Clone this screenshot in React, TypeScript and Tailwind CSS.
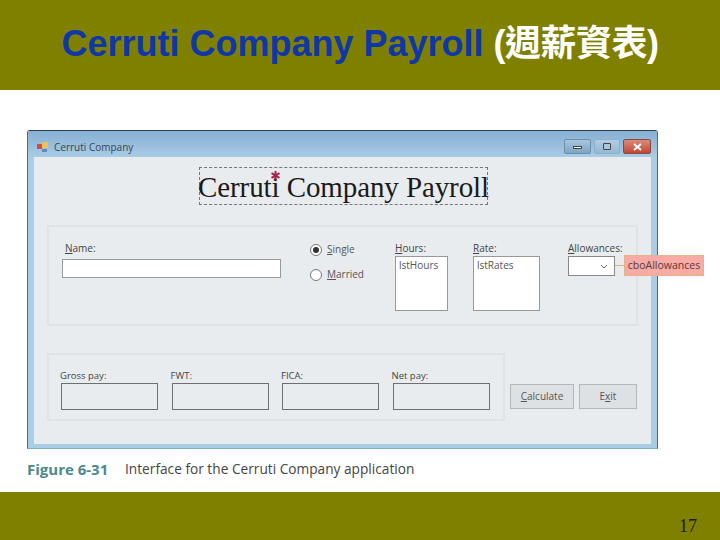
import React from "react";

const ui = "font-['Open_Sans','Noto_Sans',sans-serif]";

const Mnemonic = ({ text, at }: { text: string; at: number }) => (
  <>
    {text.slice(0, at)}
    <span className="underline">{text[at]}</span>
    {text.slice(at + 1)}
  </>
);

const PayField = ({ label, width }: { label: string; width: string }) => (
  <div className={width}>
    <div className="-ml-px h-[16px] whitespace-nowrap text-[9.5px] leading-[17px] text-[#444]">{label}</div>
    <div className="h-[27px] border border-[#6d7070] bg-[#e9ecee]" />
  </div>
);

const Radio = ({ checked, children }: { checked?: boolean; children: React.ReactNode }) => (
  <div className="flex h-[25px] items-center gap-[5px] text-[10px] text-[#555]">
    <span className="flex h-[12px] w-[12px] items-center justify-center rounded-full border border-[#777] bg-white">
      {checked && <span className="h-[6px] w-[6px] rounded-full bg-[#333]" />}
    </span>
    <span>{children}</span>
  </div>
);

const ListBox = ({ label, at, item, width, col }: { label: string; at: number; item: string; width: string; col: string }) => (
  <div className={col}>
    <div className="h-[14px] text-[10px] leading-[12px] text-[#444]">
      <Mnemonic text={label} at={at} />
    </div>
    <div className={`h-[55px] ${width} border border-[#999] bg-white pl-[3px] pt-px text-[10px] leading-[15px] text-[#555]`}>
      {item}
    </div>
  </div>
);

const App = () => {
  return (
    <div className="flex h-[540px] w-[720px] flex-col overflow-hidden bg-white">
      <header className="flex h-[90px] items-center justify-center bg-[#808000] pb-[3px] font-['Liberation_Sans','Noto_Sans_CJK_TC',sans-serif] text-[36px] font-bold">
        <span className="text-[#0f37a8]">Cerruti Company Payroll</span>
        <span className="ml-[10px] tracking-[-0.5px] text-white">(週薪資表)</span>
      </header>

      <main className="flex-1 pl-[27px] pt-[40px]">
        <div className="relative w-[631px] rounded-t-[3px] border-x border-b border-t border-x-[#3f6f8c] border-b-[#7fb0d0] border-t-[#2c3e4a] bg-[#a9cde6] pb-[4px]">
          <div className="flex h-[26px] items-center bg-gradient-to-b from-[#86b0d4] to-[#a9cbe6] pl-[9px] pr-[6px] pt-[6px]">
            <svg width="12" height="12" viewBox="0 0 12 12">
              <rect x="0" y="3" width="5" height="5" fill="#c8503c" />
              <rect x="5" y="1" width="6" height="6" fill="#ecc35a" />
              <rect x="5" y="8" width="5" height="3" fill="#5f87c0" />
            </svg>
            <span className={`ml-[5px] text-[10px] text-[#3a4550] ${ui}`}>Cerruti Company</span>
            <div className="ml-auto flex gap-[3px] pb-px">
              <div className="flex h-[15px] w-[27px] items-center justify-center rounded-[2px] border border-[#6d8fa8] bg-gradient-to-b from-[#a9c6de] to-[#7fa5c4]">
                <span className="mt-[2px] h-[3px] w-[9px] border border-[#444] bg-white" />
              </div>
              <div className="flex h-[15px] w-[26px] items-center justify-center rounded-[2px] border border-[#8fb0c8] bg-gradient-to-b from-[#b2cde2] to-[#94b8d4]">
                <span className="h-[7px] w-[8px] rounded-[1px] border border-[#444] bg-[#a9c6de]" />
              </div>
              <div className="flex h-[15px] w-[28px] items-center justify-center rounded-[2px] border border-[#8a4a42] bg-gradient-to-b from-[#d98a7a] to-[#c2452f]">
                <svg width="9" height="8" viewBox="0 0 9 8">
                  <path d="M1 1 L8 7 M8 1 L1 7" stroke="#fff" strokeWidth="2" />
                </svg>
              </div>
            </div>
          </div>

          <div className="mx-[6px] h-[287px] bg-[#e9ecee] pl-[13px] pr-[13px] pt-[10px]">
            <div className="ml-[152px] flex h-[38px] w-[289px] items-center justify-center whitespace-nowrap border border-dashed border-[#777] pt-[3px] font-['Liberation_Serif',serif] text-[29px] tracking-[-0.1px] text-[#1a1a1a]">
              <span>
                Cerruti
                <span className="relative">
                  <svg className="absolute -left-[9px] top-0" width="9" height="9" viewBox="0 0 9 9">
                    <path d="M4.5 0 V9 M0.5 2.2 L8.5 6.8 M8.5 2.2 L0.5 6.8" stroke="#a8254a" strokeWidth="2" />
                  </svg>
                </span>{" "}
                Company Payroll
              </span>
            </div>

            <div className={`mt-[20px] flex h-[101px] w-[591px] rounded-[2px] border-2 border-[#dfe3e5] pl-[13px] pt-[14px] ${ui}`}>
              <div className="w-[219px]">
                <div className="h-[18px] pl-[3px] text-[10px] leading-[14px] text-[#444]">
                  <Mnemonic text="Name:" at={0} />
                </div>
                <div className="h-[19px] border border-[#999] bg-white" />
              </div>
              <div className="-mt-[4px] ml-[29px] w-[85px]">
                <Radio checked>
                  <Mnemonic text="Single" at={0} />
                </Radio>
                <Radio>
                  <Mnemonic text="Married" at={0} />
                </Radio>
              </div>
              <ListBox label="Hours:" at={0} item="lstHours" width="w-[53px]" col="mt-px w-[78px]" />
              <ListBox label="Rate:" at={0} item="lstRates" width="w-[67px]" col="mt-px w-[95px]" />
              <div className="mt-px w-[47px]">
                <div className="h-[14px] whitespace-nowrap text-[10px] leading-[12px] text-[#444]">
                  <Mnemonic text="Allowances:" at={0} />
                </div>
                <div className="flex h-[20px] w-[47px] items-center justify-end border border-[#888] bg-white pr-[6px]">
                  <svg width="8" height="5" viewBox="0 0 8 5">
                    <path d="M1 1 L4 4 L7 1" fill="none" stroke="#666" strokeWidth="1" />
                  </svg>
                </div>
              </div>
            </div>

            <div className={`mt-[27px] flex items-end ${ui}`}>
              <div className="flex h-[68px] w-[458px] gap-[13.5px] border-2 border-[#e1e4e6] pl-[12px] pt-[12px]">
                <PayField label="Gross pay:" width="w-[97px]" />
                <PayField label="FWT:" width="w-[97px]" />
                <PayField label="FICA:" width="w-[97px]" />
                <PayField label="Net pay:" width="w-[97px]" />
              </div>
              <div className="mb-[12px] ml-[5px] flex gap-[5px] text-[10px] text-[#555]">
                <div className="flex h-[25px] w-[64px] items-center justify-center border border-[#b4b8ba] bg-[#dde1e4]">
                  <Mnemonic text="Calculate" at={0} />
                </div>
                <div className="flex h-[25px] w-[58px] items-center justify-center border border-[#b4b8ba] bg-[#dde1e4]">
                  <Mnemonic text="Exit" at={1} />
                </div>
              </div>
            </div>
          </div>

          <div className="absolute left-[587px] top-[124px] flex items-center">
            <span className="h-px w-[9px] bg-[#c8c07a]" />
            <span className={`flex h-[21px] w-[80px] items-center justify-center border border-dashed border-[#d8b878] bg-[#f8aaa4] text-[10.5px] text-[#5a3a3a] ${ui}`}>
              cboAllowances
            </span>
          </div>
        </div>

        <div className="mt-[11px] flex h-[18px] items-center whitespace-nowrap font-['Open_Sans',sans-serif]">
          <span className="w-[98px] text-[15px] font-bold text-[#4a8a8c]">Figure 6-31</span>
          <span className="text-[13.7px] text-[#444]">Interface for the Cerruti Company application</span>
        </div>
      </main>

      <footer className="flex h-[48px] items-center justify-end bg-[#808000] pr-[23px] pt-[20px] font-['Liberation_Serif',serif] text-[18px] text-[#1a1a1a]">
        17
      </footer>
    </div>
  );
};

export default App;
